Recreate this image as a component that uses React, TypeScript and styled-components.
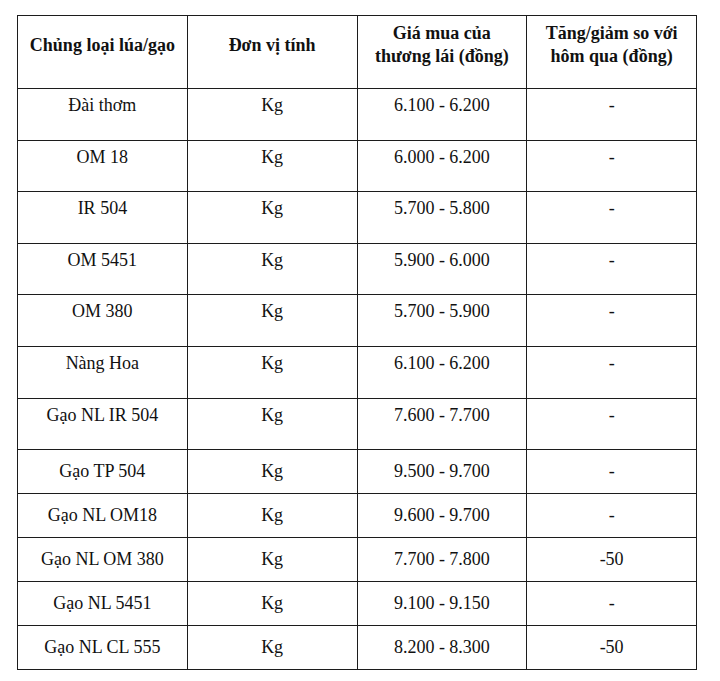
import React from "react";
import styled, { createGlobalStyle } from "styled-components";

const Global = createGlobalStyle`
  html, body { margin: 0; padding: 0; background: #ffffff; }
  body { font-family: "Liberation Serif", "Times New Roman", serif; color: #111; }
`;

const Page = styled.div`
  width: 720px;
  height: 681px;
  padding: 15px 0 0 17px;
  box-sizing: border-box;
  background: #fff;
`;

const Table = styled.table`
  width: 680px;
  border-collapse: collapse;
  table-layout: fixed;
  font-family: "Liberation Serif", "Times New Roman", serif;
  font-size: 18px;
  line-height: 23px;
`;

const HeadCell = styled.th`
  border: 1px solid #1c1c1c;
  font-weight: bold;
  text-align: center;
  vertical-align: middle;
  padding: 6px 4px 20px;
  height: 46px;
  color: #111;
`;

const Row = styled.tr<{ $h: number }>`
  height: ${(p) => p.$h}px;
`;

const Cell = styled.td<{ $tall: boolean }>`
  border: 1px solid #1c1c1c;
  text-align: center;
  vertical-align: ${(p) => (p.$tall ? "top" : "middle")};
  padding: ${(p) => (p.$tall ? "5px 4px 0" : "0 4px")};
  color: #111;
`;

type Item = { name: string; price: string; change: string };

const items: Item[] = [
  { name: "Đài thơm", price: "6.100 - 6.200", change: "-" },
  { name: "OM 18", price: "6.000 - 6.200", change: "-" },
  { name: "IR 504", price: "5.700 - 5.800", change: "-" },
  { name: "OM 5451", price: "5.900 - 6.000", change: "-" },
  { name: "OM 380", price: "5.700 - 5.900", change: "-" },
  { name: "Nàng Hoa", price: "6.100 - 6.200", change: "-" },
  { name: "Gạo NL IR 504", price: "7.600 - 7.700", change: "-" },
  { name: "Gạo TP 504", price: "9.500 - 9.700", change: "-" },
  { name: "Gạo NL OM18", price: "9.600 - 9.700", change: "-" },
  { name: "Gạo NL OM 380", price: "7.700 - 7.800", change: "-50" },
  { name: "Gạo NL 5451", price: "9.100 - 9.150", change: "-" },
  { name: "Gạo NL CL 555", price: "8.200 - 8.300", change: "-50" },
];

export default function App() {
  return (
    <Page>
      <Global />
      <Table>
        <thead>
          <tr>
            <HeadCell>Chủng loại lúa/gạo</HeadCell>
            <HeadCell>Đơn vị tính</HeadCell>
            <HeadCell>
              Giá mua của
              <br />
              thương lái (đồng)
            </HeadCell>
            <HeadCell>
              Tăng/giảm so với
              <br />
              hôm qua (đồng)
            </HeadCell>
          </tr>
        </thead>
        <tbody>
          {items.map((it, i) => {
            const tall = i < 7;
            return (
              <Row key={it.name} $h={tall ? 51.6 : 44}>
                <Cell $tall={tall}>{it.name}</Cell>
                <Cell $tall={tall}>Kg</Cell>
                <Cell $tall={tall}>{it.price}</Cell>
                <Cell $tall={tall}>{it.change}</Cell>
              </Row>
            );
          })}
        </tbody>
      </Table>
    </Page>
  );
}
